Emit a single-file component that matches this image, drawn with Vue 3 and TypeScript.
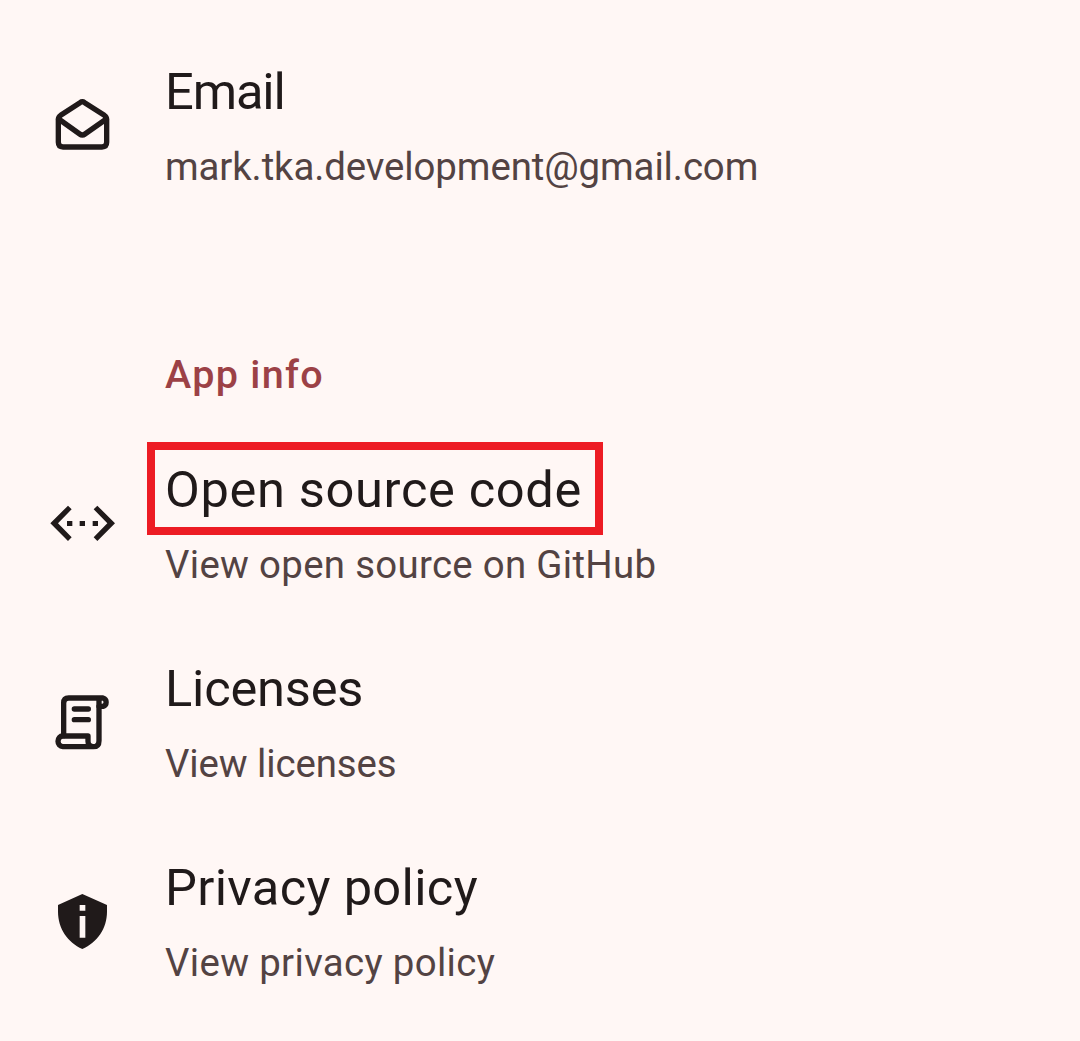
<script setup lang="ts">
interface Entry {
  id: string
  title: string
  detail: string
  viewBox: string
  highlighted?: boolean
}

const contact: Entry[] = [
  { id: 'email', title: 'Email', detail: 'mark.tka.development@gmail.com', viewBox: '27 21 198 198' },
]

const appInfo: Entry[] = [
  { id: 'source', title: 'Open source code', detail: 'View open source on GitHub', viewBox: '27 15 198 198', highlighted: true },
  { id: 'licenses', title: 'Licenses', detail: 'View licenses', viewBox: '27 27 198 198' },
  { id: 'privacy', title: 'Privacy policy', detail: 'View privacy policy', viewBox: '27 24 198 198' },
]

const sections = [
  { heading: '', entries: contact },
  { heading: 'App info', entries: appInfo },
]
</script>

<template>
  <main class="screen">
    <section v-for="section in sections" :key="section.heading">
      <h2 v-if="section.heading" class="heading">{{ section.heading }}</h2>
      <div v-for="entry in section.entries" :key="entry.id" class="row" :class="entry.id">
        <svg class="icon" :viewBox="entry.viewBox" aria-hidden="true">
          <g v-if="entry.id === 'email'" class="line">
            <path d="M55 103V172Q55 186 69 186H186Q200 186 200 172V103Q200 96 193 91L134 53Q127 48 120 53L62 91Q55 96 55 103Z" />
            <path d="M56 102L119 147Q127 153 135 147L199 102" />
          </g>
          <g v-else-if="entry.id === 'source'">
            <path d="M84 62L31 115L84 168L95 157L54 115L95 73ZM172 62L225 115L172 168L161 157L202 115L161 73Z" />
            <path d="M81 108h16v15h-16zM119 108h16v15h-16zM158 108h16v15h-16z" />
          </g>
          <g v-else-if="entry.id === 'licenses'" class="line">
            <path d="M71 167V69Q71 54 86 54H189A13 13 0 0 1 189 79H177" />
            <path d="M177 56V182Q177 200 160 200H68A14 16 0 0 1 68 168H144V184Q144 200 160 200" />
            <path d="M103 87H145M103 119H145" />
          </g>
          <path
            v-else
            fill-rule="evenodd"
            d="M127 42L201 75V95C201 145 172 187 127 207C83 187 54 145 54 95V75ZM119 75V92H136V75ZM119 108V173H136V108Z"
          />
        </svg>
        <div class="texts">
          <div class="title" :class="{ highlighted: entry.highlighted }"><span>{{ entry.title }}</span></div>
          <div class="detail">{{ entry.detail }}</div>
        </div>
      </div>
    </section>
  </main>
</template>

<style>
body {
  margin: 0;
  background: #fff7f5;
}
</style>

<style scoped>
.screen {
  box-sizing: border-box;
  height: 1041px;
  padding-top: 25px;
  overflow: hidden;
  background: #fff7f5;
  color: #201a1a;
  font-family: Roboto, 'Liberation Sans', sans-serif;
}
.heading {
  box-sizing: border-box;
  display: flex;
  align-items: flex-end;
  height: 199px;
  margin: 0;
  padding: 0 0 28px 165px;
  color: #9c4146;
  font-size: 39.5px;
  font-weight: 500;
  line-height: 40px;
  letter-spacing: 1.3px;
}
.row {
  display: flex;
  align-items: center;
  gap: 50px;
  height: 199px;
  padding-left: 49px;
}
.icon {
  flex: none;
  width: 66px;
  height: 66px;
  fill: #201a1a;
}
.line {
  fill: none;
  stroke: #201a1a;
  stroke-width: 16;
  stroke-linecap: round;
  stroke-linejoin: round;
}
.texts {
  padding-top: 2px;
  white-space: nowrap;
}
.title {
  position: relative;
  width: max-content;
  font-size: 50.6px;
  line-height: 72px;
}
.highlighted::before {
  content: '';
  position: absolute;
  top: -12px;
  left: -18px;
  box-sizing: border-box;
  width: 456px;
  height: 93px;
  border: 8px solid #ed1c24;
}
.detail {
  margin-top: 11px;
  color: #534343;
  font-size: 38.4px;
  line-height: 56px;
}
.email .title {
  letter-spacing: -1.1px;
}
.email .detail {
  letter-spacing: -0.1px;
}
.source .title {
  letter-spacing: 0.65px;
}
.source .detail {
  letter-spacing: 0.31px;
}
.licenses .title {
  letter-spacing: -0.2px;
}
.licenses .detail {
  letter-spacing: -0.1px;
}
.privacy .title {
  letter-spacing: 0.33px;
}
.privacy .detail {
  letter-spacing: 0.34px;
}
</style>
